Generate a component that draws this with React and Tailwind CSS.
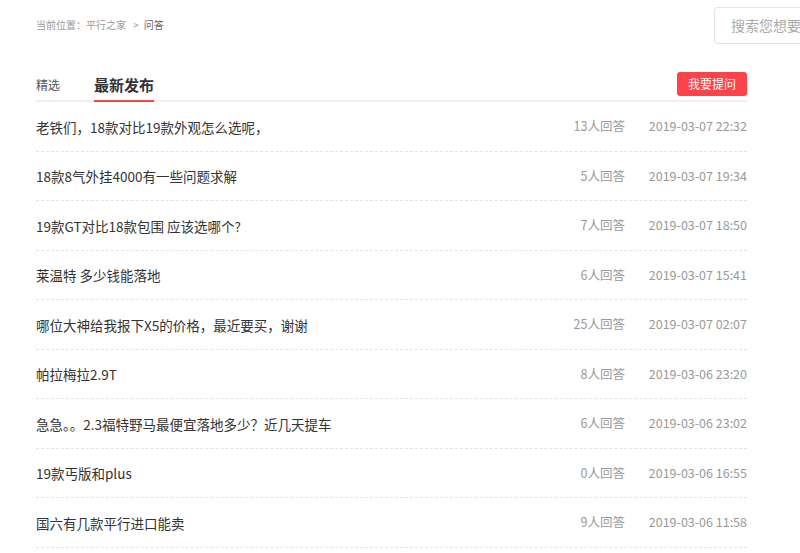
import React from "react";

const rows = [
  ["老铁们，18款对比19款外观怎么选呢，", "13人回答", "2019-03-07 22:32"],
  ["18款8气外挂4000有一些问题求解", "5人回答", "2019-03-07 19:34"],
  ["19款GT对比18款包围 应该选哪个?", "7人回答", "2019-03-07 18:50"],
  ["莱温特 多少钱能落地", "6人回答", "2019-03-07 15:41"],
  ["哪位大神给我报下X5的价格，最近要买，谢谢", "25人回答", "2019-03-07 02:07"],
  ["帕拉梅拉2.9T", "8人回答", "2019-03-06 23:20"],
  ["急急。。2.3福特野马最便宜落地多少？近几天提车", "6人回答", "2019-03-06 23:02"],
  ["19款丐版和plus", "0人回答", "2019-03-06 16:55"],
  ["国六有几款平行进口能卖", "9人回答", "2019-03-06 11:58"],
];

export default function App() {
  return (
    <div
      className="w-[800px] h-[553px] overflow-hidden bg-white relative"
      style={{ fontFamily: '"Noto Sans CJK SC", "Noto Sans", sans-serif' }}
    >
      <div className="flex items-start justify-between h-[60px]">
        <div className="pl-[36px] pt-[18px] text-[10px] leading-[14px] text-[#999]">
          当前位置：平行之家 <span className="mx-[5px]">&gt;</span>
          <span className="text-[#666]">问答</span>
        </div>
        <div className="mt-[7px] w-[86px] h-[37px] border border-[#e6e6e6] rounded-l-[4px] border-r-0 pl-[16px] flex items-center text-[14px] text-[#aaa] whitespace-nowrap overflow-hidden">
          搜索您想要的
        </div>
      </div>

      <div className="ml-[36px] w-[711px]">
        <div className="flex items-end justify-between border-b-2 border-[#efefef] h-[42px]">
          <div className="flex items-end gap-[34px]">
            <div className="text-[12px] text-[#555] leading-[18px] pb-[6px]">精选</div>
            <div className="text-[15px] font-bold text-[#333] leading-[22px] pb-[4px] border-b-2 border-[#f24a4a] -mb-[2px]">
              最新发布
            </div>
          </div>
          <div className="mb-[4px] h-[24px] w-[70px] rounded-[3px] bg-[#fc4349] text-white text-[12px] flex items-center justify-center">
            我要提问
          </div>
        </div>

        {rows.map(([t, c, d], i) => (
          <div
            key={i}
            className="flex items-center h-[49.5px] pt-[1px] border-b border-dashed border-[#e3e3e3]"
          >
            <div className="flex-1 text-[13.5px] text-[#333] truncate">{t}</div>
            <div className="text-[12.5px] text-[#999] text-right">{c}</div>
            <div className="w-[122px] text-[12.5px] text-[#999] text-right">{d}</div>
          </div>
        ))}
      </div>
    </div>
  );
}
